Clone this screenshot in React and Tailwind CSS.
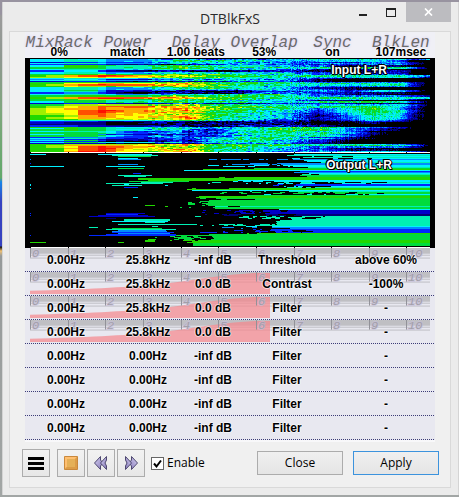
import React from 'react';

const COLORS = ['#000000', '#000078', '#0000c8', '#0028ff', '#008cff', '#00f0ff', '#00f0b4', '#00dc3c', '#22d800', '#a0f000', '#ffff00', '#ffaa00', '#ff5000', '#ff1000'];

const STOPS = [0, 16, 34, 52, 75, 100, 130, 160, 185, 210, 235, 260, 290, 320, 345, 370, 385, 401];

// [row count, level (hex index into COLORS) at each stop]
const INPUT_BANDS = [
  [1, '556555455657776645420'.slice(0, 18)], [2, '556655578876666400'], [1, '223344456655435520'],
  [1, '556655556766655530'], [1, '333332224655445520'], [2, '558877778776522210'], [1, '778877788888888840'],
  [1, '777777777777777740'], [1, '556655567766322100'], [2, '335532222344213310'], [2, '556655567776513310'],
  [1, '77889888a877555510'], [2, '89bcdcba9988877764'], [1, '99aabba9a887666651'], [1, '556655578776421000'],
  [1, '445533346656200000'], [1, '556655568776200000'], [1, '223332224544200000'], [1, '7788888a9988555530'],
  [1, '88aabbbba988887730'], [2, '89bcddcba988767730'], [1, '88a999aa9877555530'], [2, '556655579876320000'],
  [1, '556655567676521000'], [1, '557733224466636630'], [1, '556632112345546630'], [2, '334431222456432210'],
  [1, '5566555688a7522000'], [2, '778888889988555541'], [2, '89bcddcba988887775'], [1, '77899887a977666630'],
  [1, '777777777776320000'], [2, '557777778877888740'], [1, '223322234445432200'], [2, '7799aa9a9877666640'],
  [2, '89abcdcbba98888630'], [2, '9abbcccbb988579520'], [3, '9aaddccb9977478730'], [2, '99accbba8876368620'],
  [2, '889ccbbba876257620'], [2, '89abbbbc8776357620'], [1, '88899abb9765357520'], [1, '556666677654246410'],
  [1, '333322222344124300'], [2, '221111113233112000'], [1, '111110113233211000'], [2, '333222212444310000'],
  [1, '88877655678a965310'], [1, '55877766569a853210'], [2, '778776544789953100'], [1, '5566633358a9650000'],
  [2, '777764434788862000'], [1, '557733236888742000'], [2, '777764434688851000'], [1, '334444347887430000'],
  [1, '556643337888731000'], [1, '443322337887420000'], [1, '557722237876410000'], [1, '333311226876410000'],
  [1, '557766547786310000'], [1, '222211125665310000'], [1, '8899aabba988776530'], [1, '89bbcbbbaa99888750'],
  [2, '89addcba9987555530'], [1, '88bddbaa8876421100'], [2, '88addabb8876522100'], [2, '88bddaab8865666640'],
  [2, '88bddaab8865665530'],
];

function makeRandom(seed) {
  let s = seed;
  return () => {
    s = (s * 1664525 + 1013904223) % 4294967296;
    return s / 4294967296;
  };
}

function columns() {
  const out = [0, 16, 34, 48, 68, 76, 86, 94, 103, 108, 114, 118];
  for (let x = 122; x < 160; x += 3) out.push(x);
  for (let x = 160; x < 260; x += 2) out.push(x);
  for (let x = 260; x < 400; x += 1) out.push(x);
  out.push(400);
  return out;
}

function levelAt(profile, x) {
  let i = 0;
  while (i < STOPS.length - 2 && x >= STOPS[i + 1]) i++;
  const a = parseInt(profile[i], 16);
  const b = parseInt(profile[i + 1], 16);
  return a + ((b - a) * (x - STOPS[i])) / (STOPS[i + 1] - STOPS[i]);
}

function falloff(x, base) {
  if (x < 76) return 0;
  if (x < 120) return 0.8;
  if (x < 150) return base > 9 ? 1.2 : 0;
  const ramp = Math.min(1, (x - 150) / 35);
  if (x < 290) return ramp * (base > 9 ? 2.4 : 1.9);
  return x > 330 ? 1 : 1.3;
}

function inputPaths() {
  const rnd = makeRandom(77);
  const cols = columns();
  const streak = cols.map(() => (rnd() - 0.5) * 1.2);
  const paths = COLORS.map(() => '');
  let y = 0;
  for (const [count, profile] of INPUT_BANDS) {
    for (let r = 0; r < count && y < 93; r++, y++) {
      let drift = 0;
      for (let c = 0; c < cols.length - 1; c++) {
        const x = cols[c];
        const w = cols[c + 1] - x;
        const base = levelAt(profile, x);
        let amp = x < 68 ? 0.3 : x < 115 ? 1 : x < 280 ? 2.7 : 1.5;
        if (base < 1) amp *= 0.3;
        drift = drift * 0.4 + (rnd() - 0.5) * amp;
        let v = base - falloff(x, base) + drift + (x > 115 && base > 1 ? streak[c] : 0);
        if (x > 230) v = Math.min(v, 9);
        v = Math.max(0, Math.min(13, Math.round(v)));
        if (v > 0) paths[v] += `M${x} ${y}h${w}v1h-${w}z`;
      }
    }
  }
  return paths;
}

// [row count, colour index, solid from x, scatter from x]
const OUTPUT_BANDS = [
  [1, 5, 262, 230], [1, 6, 258, 258], [1, 5, 330, 258], [1, 6, 272, 258], [1, 5, 345, 258], [1, 4, 262, 170], [2, 5, 275, 258],
  [1, 6, 300, 270], [2, 4, 262, 170], [2, 5, 265, 168], [1, 6, 280, 262], [1, 7, 225, 215], [1, 8, 175, 163],
  [1, 5, 155, 155], [1, 3, 268, 268], [1, 4, 264, 264], [1, 5, 282, 262], [1, 6, 290, 262], [2, 7, 285, 245],
  [1, 8, 205, 185], [2, 8, 108, 108], [1, 5, 195, 160], [1, 5, 280, 180], [1, 6, 355, 170], [1, 5, 355, 162],
  [2, 3, 275, 240], [1, 5, 300, 238], [1, 6, 310, 238], [1, 8, 205, 160], [1, 8, 158, 158], [1, 5, 162, 162],
  [1, 6, 260, 195], [2, 7, 352, 190], [1, 5, 345, 220], [1, 7, 222, 210], [2, 8, 168, 168], [2, 7, 225, 170],
  [2, 7, 178, 168], [4, 7, 180, 158], [1, 6, 215, 175], [1, 7, 183, 150], [1, 7, 183, 180], [1, 5, 248, 215],
  [2, 2, 262, 165], [2, 2, 240, 170], [2, 1, 265, 172], [2, 6, 295, 165], [1, 6, 285, 205], [1, 6, 263, 263],
  [1, 6, 252, 248], [3, 6, 248, 243], [1, 6, 246, 185], [1, 6, 248, 170], [1, 5, 244, 190], [2, 4, 262, 185],
  [1, 3, 262, 200], [2, 3, 285, 185], [1, 3, 270, 170], [1, 8, 230, 205], [1, 7, 190, 160], [1, 7, 160, 140],
  [4, 7, 182, 125], [1, 8, 170, 140], [2, 8, 163, 135],
];

// [x, y, width, colour index]
const OUTPUT_SEGMENTS = [
  [0, 0, 16, 5], [68, 0, 54, 5], [82, 1, 46, 6], [88, 2, 33, 7], [88, 4, 20, 5], [88, 5, 23, 4], [88, 10, 20, 4], [76, 12, 39, 5],
  [0, 12, 34, 5], [88, 14, 26, 7], [103, 19, 8, 3], [88, 21, 34, 6], [94, 22, 22, 6], [118, 26, 90, 8], [99, 27, 60, 7],
  [111, 28, 32, 6], [76, 29, 57, 6], [94, 30, 5, 5], [82, 31, 30, 6], [94, 33, 14, 3], [135, 31, 3, 5], [103, 43, 5, 5],
  [115, 51, 10, 8], [135, 52, 3, 8], [76, 59, 39, 2], [76, 60, 32, 3], [68, 61, 50, 2], [59, 62, 66, 2], [76, 64, 10, 1],
  [94, 65, 46, 6], [94, 66, 46, 6], [82, 67, 56, 5], [115, 68, 20, 6], [88, 70, 79, 6], [122, 72, 6, 6], [59, 73, 9, 6],
  [82, 74, 50, 7], [76, 75, 70, 6], [88, 76, 48, 4], [82, 77, 55, 4], [82, 78, 62, 3], [88, 79, 52, 4], [76, 80, 70, 3],
  [59, 81, 98, 3], [115, 86, 10, 8], [115, 87, 10, 8], [0, 88, 16, 8], [88, 88, 6, 8], [118, 85, 8, 8],
  [0, 5, 1, 4], [0, 9, 1, 3], [0, 30, 1, 5], [0, 31, 1, 5], [0, 34, 1, 5], [0, 59, 1, 3], [0, 61, 1, 3], [0, 81, 1, 3],
];

function outputPaths() {
  const rnd = makeRandom(4242);
  const paths = COLORS.map(() => '');
  const put = (x, y, w, k) => {
    paths[k] += `M${x} ${y}h${w}v1h-${w}z`;
  };
  let y = 0;
  for (const [count, color, solid, scatter] of OUTPUT_BANDS) {
    for (let r = 0; r < count && y < 91; r++, y++) {
      const start = Math.round(solid + (rnd() - 0.5) * 5);
      put(start, y, 400 - start, color);
      let x = scatter;
      while (x < start) {
        const chance = 0.15 + (0.5 * (x - scatter)) / (start - scatter + 1);
        const w = Math.min(start - x, 2 + Math.floor(rnd() * rnd() * 16));
        if (rnd() < chance) put(x, y, w, color);
        x += w;
      }
    }
  }
  while (y < 92) put(163, y++, 237, 7);
  OUTPUT_SEGMENTS.forEach(([x, sy, w, k]) => put(x, sy, w, k));
  return paths;
}

const INPUT = inputPaths();
const OUTPUT = outputPaths();
const TICKS = [0, 38, 75, 113, 151, 188, 226, 264, 301, 339, 376];

function Spectrum({ label, paths }) {
  return (
    <div className="relative h-[95px] bg-black">
      <svg viewBox="0 0 410 95" preserveAspectRatio="none" shapeRendering="crispEdges" className="block h-full w-full" aria-hidden="true">
        <g transform="translate(5 1)">
          {paths.map((d, i) => (d ? <path key={i} d={d} fill={COLORS[i]} /> : null))}
        </g>
        <path d="M5 94.5H405" stroke="#fff" />
        {TICKS.map((t) => <path key={t} d={`M${t + 5.5} 94v1`} stroke="#000" />)}
      </svg>
      <span className="absolute right-[36px] top-[4px] w-20 text-center text-[12px] leading-4 font-bold text-white [text-shadow:1px_0_#000,-1px_0_#000,0_1px_#000,0_-1px_#000,1px_1px_#000,-1px_-1px_#000]">
        {label}
      </span>
    </div>
  );
}

function Ruler({ curve }) {
  return (
    <svg viewBox="0 0 410 24" preserveAspectRatio="none" className="absolute inset-0 h-full w-full" aria-hidden="true">
      <rect x="5" y="0" width="400" height="6" fill="#bfbfc3" />
      <path d="M5 7.5H405M5 10.5H405" stroke="#bcbcc4" />
      {curve && <path d="M5 23V19.500C60 18 100 16 130 13C165 10 190 3 230 1H245V23Z" fill="#f5888d" fillOpacity="0.72" />}
      {TICKS.map((t, i) => (
        <g key={t}>
          <path d={`M${t + 5.5} 0V10`} stroke="#909098" />
          <text x={t + 7} y="9" fontSize="12" fontStyle="italic" fontFamily="Liberation Mono, monospace" fill="#a29fa9" stroke="#c6bedb" strokeOpacity="0.6" strokeWidth="2" paintOrder="stroke">
            {i}
          </text>
        </g>
      ))}
    </svg>
  );
}

const HEADERS = [['MixRack', '0%'], ['Power', 'match'], ['Delay', '1.00 beats'], ['Overlap', '53%'], ['Sync', 'on'], ['BlkLen', '107msec']];

const ROWS = [
  ['0.00Hz', '25.8kHz', '-inf dB', 'Threshold', 'above 60%'],
  ['0.00Hz', '25.8kHz', '0.0 dB', 'Contrast', '-100%'],
  ['0.00Hz', '25.8kHz', '0.0 dB', 'Filter', '-'],
  ['0.00Hz', '25.8kHz', '0.0 dB', 'Filter', '-'],
  ['0.00Hz', '0.00Hz', '-inf dB', 'Filter', '-'],
  ['0.00Hz', '0.00Hz', '-inf dB', 'Filter', '-'],
  ['0.00Hz', '0.00Hz', '-inf dB', 'Filter', '-'],
  ['0.00Hz', '0.00Hz', '-inf dB', 'Filter', '-'],
];

const iconButton = 'flex h-7 w-7 items-center justify-center border border-[#acacac] bg-linear-to-b from-[#f2f2f2] to-[#e7e7e7]';
const textButton = "h-6 w-[86px] border bg-linear-to-b from-[#f0f0f0] to-[#e5e5e5] font-['Open_Sans',sans-serif] text-[12px] leading-4 text-black";

function Arrows({ flip }) {
  return (
    <svg width="16" height="16" viewBox="0 0 16 16" className={flip ? '-scale-x-100' : ''} aria-hidden="true">
      <defs>
        <linearGradient id={flip ? 'fwd' : 'rew'} x1="0" y1="0" x2="1" y2="1">
          <stop offset="0" stopColor="#d8d2f2" />
          <stop offset="1" stopColor="#8478b8" />
        </linearGradient>
      </defs>
      <g fill={`url(#${flip ? 'fwd' : 'rew'})`} stroke="#4e4870" strokeWidth="1" strokeLinejoin="round">
        <path d="M7.500 1.500V5L10 8L7.500 11V14.500L1.500 8Z" />
        <path d="M13.500 1.500V5L12 8L13.500 11V14.500L7.500 8Z" />
      </g>
    </svg>
  );
}

export default function App() {
  return (
    <div className="min-h-screen bg-[linear-gradient(#9893a0_0,#9893a0_14px,#9b9b9b_16px,#8e9890_60px,#7fa77d_110px,#62a96a_178px,#1684e8_182px,#3642c0_202px,#3642c0_246px,#111_247px,#f0c070_251px,#969a99_256px,#a2a6a5_100%)] pl-[2px] pt-[2px] pb-px">
      <main className="flex flex-col border-x border-[#d4d4d4] bg-[#ebebeb] pr-[7px] pb-[7px] pl-[6px] font-['Liberation_Sans',Arial,sans-serif]">
        <header className="flex h-[29px] items-start">
          <div className="flex-1" />
          <h1 className="pt-[7px] font-['Open_Sans',sans-serif] text-[14px] leading-5 text-[#2b2b2b]">DTBlkFxS</h1>
          <div className="flex flex-1 justify-end">
            <button type="button" aria-label="Minimize" className="flex h-5 w-[26px] items-center justify-center">
              <svg width="9" height="12" aria-hidden="true"><path d="M0 8h8v2H0z" fill="#222" /></svg>
            </button>
            <button type="button" aria-label="Maximize" className="flex h-5 w-[30px] items-center justify-center">
              <svg width="10" height="9" aria-hidden="true"><path d="M0 0h10v9H0zM1 2v6h8V2z" fillRule="evenodd" fill="#222" /></svg>
            </button>
            <button type="button" aria-label="Close window" className="flex h-5 w-[45px] items-center justify-center bg-[#bcbcc0]">
              <svg width="9" height="8" aria-hidden="true"><path d="M1 .5 8 7.500M8 .5 1 7.500" stroke="#fff" strokeWidth="1.700" /></svg>
            </button>
          </div>
        </header>

        <section className="border border-[#d9d9d9] bg-[#f0f0f0] pb-[10px]">
          <div className="mr-[15px] ml-[15px] border-b-2 border-[#f8f8fa] bg-[#e8e8f0]">
            <div className="grid h-[26px] grid-cols-6 bg-[#f0f0f6]">
              {HEADERS.map(([title, value]) => (
                <div key={title} className="flex flex-col items-center whitespace-nowrap">
                  <span className="h-3 font-['Liberation_Mono',monospace] text-[16px] leading-[22px] italic text-[#6b6b6b] [text-shadow:0_0_3px_#d3c6f2]">{title}</span>
                  <span className="relative text-[12px] leading-4 font-bold text-black [text-shadow:1px_0_#fffa,-1px_0_#fffa,0_1px_#fffa,0_-1px_#fffa]">{value}</span>
                </div>
              ))}
            </div>
            <Spectrum label="Input L+R" paths={INPUT} />
            <Spectrum label="Output L+R" paths={OUTPUT} />
            {ROWS.map((row, i) => (
              <div key={i} className="relative h-6 bg-[repeating-linear-gradient(90deg,#3c3c78_0,#3c3c78_1px,#e8e8f0_1px,#e8e8f0_2px)] pb-px">
                <div className="relative grid h-full grid-cols-[82fr_82fr_48fr_100fr_98fr] bg-[#e8e8f0]">
                  {i < 4 && <Ruler curve={i > 0} />}
                  {row.map((cell, j) => (
                    <span key={j} className="relative pt-1 text-center text-[12px] leading-4 font-bold whitespace-nowrap text-black [text-shadow:1px_0_#fff8,-1px_0_#fff8,0_1px_#fff8,0_-1px_#fff8]">
                      {cell}
                    </span>
                  ))}
                </div>
              </div>
            ))}
          </div>

          <div className="flex items-center pt-[7px] pr-[11px] pl-3">
            <button type="button" aria-label="Menu" className={iconButton}>
              <svg width="16" height="13" aria-hidden="true"><path d="M0 0h16v3H0zM0 5h16v3H0zM0 10h16v3H0z" /></svg>
            </button>
            <div className="ml-[7px] flex gap-[2px]">
              <button type="button" aria-label="Stop" className={iconButton}>
                <svg width="14" height="14" aria-hidden="true">
                  <path d="M.5 .5h13v13H.5z" fill="#e5b058" stroke="#c9883c" />
                  <path d="M1 12V1h12L11 3H3v8z" fill="#ffbf70" />
                  <path d="M13 1v12H1l2-2h8V3z" fill="#dc9c48" />
                </svg>
              </button>
              <button type="button" aria-label="Rewind" className={iconButton}><Arrows /></button>
              <button type="button" aria-label="Forward" className={iconButton}><Arrows flip /></button>
            </div>
            <label className="ml-[6px] flex items-center gap-[3px] font-['Open_Sans',sans-serif] text-[12px] leading-4">
              <span className="relative flex h-[13px] w-[13px]">
                <input type="checkbox" defaultChecked className="peer h-[13px] w-[13px] appearance-none border border-[#666] bg-white" />
                <svg width="13" height="13" className="pointer-events-none absolute inset-0 hidden peer-checked:block" aria-hidden="true">
                  <path d="M3 6.500 5.500 9.500 10 3.500" fill="none" stroke="#000" strokeWidth="2" />
                </svg>
              </span>
              Enable
            </label>
            <div className="ml-auto flex gap-[10px]">
              <button type="button" className={`${textButton} border-[#acacac]`}>Close</button>
              <button type="button" className={`${textButton} border-[#3c93dd]`}>Apply</button>
            </div>
          </div>
        </section>
      </main>
    </div>
  );
}
